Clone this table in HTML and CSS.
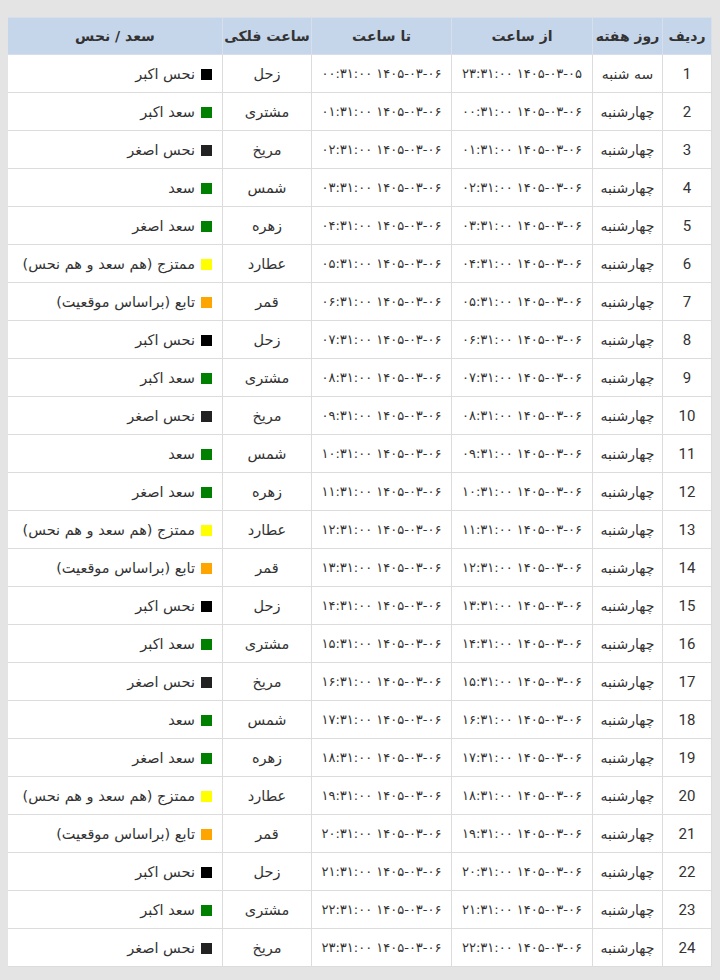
FILE: index.html
```html
<!DOCTYPE html>
<html lang="fa" dir="rtl">
<head>
<meta charset="utf-8">
<title>ساعات فلکی</title>
<link rel="stylesheet" href="styles.css">
</head>
<body>
<table class="hours">
<colgroup>
<col class="c-idx"><col class="c-day"><col class="c-from"><col class="c-to"><col class="c-planet"><col class="c-state">
</colgroup>
<thead>
<tr><th>ردیف</th><th>روز هفته</th><th>از ساعت</th><th>تا ساعت</th><th>ساعت فلکی</th><th>سعد / نحس</th></tr>
</thead>
<tbody>
<tr><td class="idx">1</td><td class="day">سه شنبه</td><td class="dt">۱۴۰۵-۰۳-۰۵ ۲۳:۳۱:۰۰</td><td class="dt">۱۴۰۵-۰۳-۰۶ ۰۰:۳۱:۰۰</td><td>زحل</td><td class="state"><span class="sq black"></span>نحس اکبر</td></tr>
<tr><td class="idx">2</td><td class="day">چهارشنبه</td><td class="dt">۱۴۰۵-۰۳-۰۶ ۰۰:۳۱:۰۰</td><td class="dt">۱۴۰۵-۰۳-۰۶ ۰۱:۳۱:۰۰</td><td>مشتری</td><td class="state"><span class="sq green"></span>سعد اکبر</td></tr>
<tr><td class="idx">3</td><td class="day">چهارشنبه</td><td class="dt">۱۴۰۵-۰۳-۰۶ ۰۱:۳۱:۰۰</td><td class="dt">۱۴۰۵-۰۳-۰۶ ۰۲:۳۱:۰۰</td><td>مریخ</td><td class="state"><span class="sq dark"></span>نحس اصغر</td></tr>
<tr><td class="idx">4</td><td class="day">چهارشنبه</td><td class="dt">۱۴۰۵-۰۳-۰۶ ۰۲:۳۱:۰۰</td><td class="dt">۱۴۰۵-۰۳-۰۶ ۰۳:۳۱:۰۰</td><td>شمس</td><td class="state"><span class="sq green"></span>سعد</td></tr>
<tr><td class="idx">5</td><td class="day">چهارشنبه</td><td class="dt">۱۴۰۵-۰۳-۰۶ ۰۳:۳۱:۰۰</td><td class="dt">۱۴۰۵-۰۳-۰۶ ۰۴:۳۱:۰۰</td><td>زهره</td><td class="state"><span class="sq green"></span>سعد اصغر</td></tr>
<tr><td class="idx">6</td><td class="day">چهارشنبه</td><td class="dt">۱۴۰۵-۰۳-۰۶ ۰۴:۳۱:۰۰</td><td class="dt">۱۴۰۵-۰۳-۰۶ ۰۵:۳۱:۰۰</td><td>عطارد</td><td class="state"><span class="sq yellow"></span>ممتزج (هم سعد و هم نحس)</td></tr>
<tr><td class="idx">7</td><td class="day">چهارشنبه</td><td class="dt">۱۴۰۵-۰۳-۰۶ ۰۵:۳۱:۰۰</td><td class="dt">۱۴۰۵-۰۳-۰۶ ۰۶:۳۱:۰۰</td><td>قمر</td><td class="state"><span class="sq orange"></span>تابع (براساس موقعیت)</td></tr>
<tr><td class="idx">8</td><td class="day">چهارشنبه</td><td class="dt">۱۴۰۵-۰۳-۰۶ ۰۶:۳۱:۰۰</td><td class="dt">۱۴۰۵-۰۳-۰۶ ۰۷:۳۱:۰۰</td><td>زحل</td><td class="state"><span class="sq black"></span>نحس اکبر</td></tr>
<tr><td class="idx">9</td><td class="day">چهارشنبه</td><td class="dt">۱۴۰۵-۰۳-۰۶ ۰۷:۳۱:۰۰</td><td class="dt">۱۴۰۵-۰۳-۰۶ ۰۸:۳۱:۰۰</td><td>مشتری</td><td class="state"><span class="sq green"></span>سعد اکبر</td></tr>
<tr><td class="idx">10</td><td class="day">چهارشنبه</td><td class="dt">۱۴۰۵-۰۳-۰۶ ۰۸:۳۱:۰۰</td><td class="dt">۱۴۰۵-۰۳-۰۶ ۰۹:۳۱:۰۰</td><td>مریخ</td><td class="state"><span class="sq dark"></span>نحس اصغر</td></tr>
<tr><td class="idx">11</td><td class="day">چهارشنبه</td><td class="dt">۱۴۰۵-۰۳-۰۶ ۰۹:۳۱:۰۰</td><td class="dt">۱۴۰۵-۰۳-۰۶ ۱۰:۳۱:۰۰</td><td>شمس</td><td class="state"><span class="sq green"></span>سعد</td></tr>
<tr><td class="idx">12</td><td class="day">چهارشنبه</td><td class="dt">۱۴۰۵-۰۳-۰۶ ۱۰:۳۱:۰۰</td><td class="dt">۱۴۰۵-۰۳-۰۶ ۱۱:۳۱:۰۰</td><td>زهره</td><td class="state"><span class="sq green"></span>سعد اصغر</td></tr>
<tr><td class="idx">13</td><td class="day">چهارشنبه</td><td class="dt">۱۴۰۵-۰۳-۰۶ ۱۱:۳۱:۰۰</td><td class="dt">۱۴۰۵-۰۳-۰۶ ۱۲:۳۱:۰۰</td><td>عطارد</td><td class="state"><span class="sq yellow"></span>ممتزج (هم سعد و هم نحس)</td></tr>
<tr><td class="idx">14</td><td class="day">چهارشنبه</td><td class="dt">۱۴۰۵-۰۳-۰۶ ۱۲:۳۱:۰۰</td><td class="dt">۱۴۰۵-۰۳-۰۶ ۱۳:۳۱:۰۰</td><td>قمر</td><td class="state"><span class="sq orange"></span>تابع (براساس موقعیت)</td></tr>
<tr><td class="idx">15</td><td class="day">چهارشنبه</td><td class="dt">۱۴۰۵-۰۳-۰۶ ۱۳:۳۱:۰۰</td><td class="dt">۱۴۰۵-۰۳-۰۶ ۱۴:۳۱:۰۰</td><td>زحل</td><td class="state"><span class="sq black"></span>نحس اکبر</td></tr>
<tr><td class="idx">16</td><td class="day">چهارشنبه</td><td class="dt">۱۴۰۵-۰۳-۰۶ ۱۴:۳۱:۰۰</td><td class="dt">۱۴۰۵-۰۳-۰۶ ۱۵:۳۱:۰۰</td><td>مشتری</td><td class="state"><span class="sq green"></span>سعد اکبر</td></tr>
<tr><td class="idx">17</td><td class="day">چهارشنبه</td><td class="dt">۱۴۰۵-۰۳-۰۶ ۱۵:۳۱:۰۰</td><td class="dt">۱۴۰۵-۰۳-۰۶ ۱۶:۳۱:۰۰</td><td>مریخ</td><td class="state"><span class="sq dark"></span>نحس اصغر</td></tr>
<tr><td class="idx">18</td><td class="day">چهارشنبه</td><td class="dt">۱۴۰۵-۰۳-۰۶ ۱۶:۳۱:۰۰</td><td class="dt">۱۴۰۵-۰۳-۰۶ ۱۷:۳۱:۰۰</td><td>شمس</td><td class="state"><span class="sq green"></span>سعد</td></tr>
<tr><td class="idx">19</td><td class="day">چهارشنبه</td><td class="dt">۱۴۰۵-۰۳-۰۶ ۱۷:۳۱:۰۰</td><td class="dt">۱۴۰۵-۰۳-۰۶ ۱۸:۳۱:۰۰</td><td>زهره</td><td class="state"><span class="sq green"></span>سعد اصغر</td></tr>
<tr><td class="idx">20</td><td class="day">چهارشنبه</td><td class="dt">۱۴۰۵-۰۳-۰۶ ۱۸:۳۱:۰۰</td><td class="dt">۱۴۰۵-۰۳-۰۶ ۱۹:۳۱:۰۰</td><td>عطارد</td><td class="state"><span class="sq yellow"></span>ممتزج (هم سعد و هم نحس)</td></tr>
<tr><td class="idx">21</td><td class="day">چهارشنبه</td><td class="dt">۱۴۰۵-۰۳-۰۶ ۱۹:۳۱:۰۰</td><td class="dt">۱۴۰۵-۰۳-۰۶ ۲۰:۳۱:۰۰</td><td>قمر</td><td class="state"><span class="sq orange"></span>تابع (براساس موقعیت)</td></tr>
<tr><td class="idx">22</td><td class="day">چهارشنبه</td><td class="dt">۱۴۰۵-۰۳-۰۶ ۲۰:۳۱:۰۰</td><td class="dt">۱۴۰۵-۰۳-۰۶ ۲۱:۳۱:۰۰</td><td>زحل</td><td class="state"><span class="sq black"></span>نحس اکبر</td></tr>
<tr><td class="idx">23</td><td class="day">چهارشنبه</td><td class="dt">۱۴۰۵-۰۳-۰۶ ۲۱:۳۱:۰۰</td><td class="dt">۱۴۰۵-۰۳-۰۶ ۲۲:۳۱:۰۰</td><td>مشتری</td><td class="state"><span class="sq green"></span>سعد اکبر</td></tr>
<tr><td class="idx">24</td><td class="day">چهارشنبه</td><td class="dt">۱۴۰۵-۰۳-۰۶ ۲۲:۳۱:۰۰</td><td class="dt">۱۴۰۵-۰۳-۰۶ ۲۳:۳۱:۰۰</td><td>مریخ</td><td class="state"><span class="sq dark"></span>نحس اصغر</td></tr>
</tbody>
</table>
</body>
</html>
```
FILE: styles.css
```css
html, body {
  background: #e4e4e4;
}
body {
  margin: 17px 8px 14px 8px;
  font-family: "DejaVu Sans", sans-serif;
  color: #333;
}
.hours {
  width: 704px;
  border-collapse: collapse;
  table-layout: fixed;
  background: #fff;
  font-size: 14.5px;
}
.c-idx { width: 49px; }
.c-day { width: 70px; }
.c-from { width: 141px; }
.c-to { width: 140px; }
.c-planet { width: 89px; }
.c-state { width: 215px; }
.hours th {
  background: #c6d6ea;
  height: 36px;
  padding: 0;
  font-weight: bold;
  font-size: 14px;
  color: #333;
  border: 1px solid #d6dfea;
  text-align: center;
  white-space: nowrap;
}
.hours td {
  height: 37px;
  padding: 0;
  border: 1px solid #dcdcdc;
  text-align: center;
  white-space: nowrap;
}
.hours td.day {
  font-size: 14px;
}
.hours td.dt {
  font-size: 13px;
}
.hours td.idx {
  font-family: "Roboto", "DejaVu Sans", sans-serif;
  font-size: 15px;
}
.hours td.state {
  text-align: right;
  padding-right: 10px;
}
.sq {
  display: inline-block;
  width: 11px;
  height: 11px;
  margin-left: 6px;
  vertical-align: -1px;
}
.black { background: #000; }
.dark { background: #222; }
.green { background: #008000; }
.yellow { background: #ffff00; }
.orange { background: #ffa500; }
```
